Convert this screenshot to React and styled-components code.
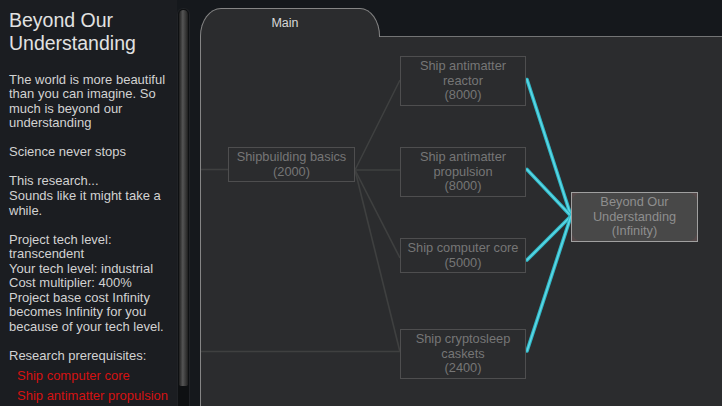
import React from "react";
import styled, { createGlobalStyle } from "styled-components";

const Global = createGlobalStyle`
  html, body { margin: 0; padding: 0; background: #15181c; overflow: hidden; }
  body { font-family: "Liberation Sans", Arial, sans-serif; }
  * { box-sizing: border-box; }
`;

const Screen = styled.div`
  display: flex;
  width: 722px;
  height: 406px;
  background: #15181c;
  overflow: hidden;
`;

const Sidebar = styled.aside`
  width: 177px;
  flex: none;
  padding: 9px 4px 0 9px;
  background: #1b1d21;
  color: #d2d2d2;
  overflow: hidden;
`;

const Title = styled.h1`
  margin: 0 0 18.5px;
  font-size: 19.5px;
  line-height: 22.5px;
  font-weight: normal;
  color: #e2e2e2;
`;

const Para = styled.p`
  margin: 0 0 14.56px;
  font-size: 13px;
  line-height: 14.56px;
  white-space: pre-line;
`;

const PrereqList = styled.ul`
  list-style: none;
  margin: 2.5px 0 0;
  padding: 0 0 0 8px;
`;

const Prereq = styled.li`
  font-size: 13px;
  line-height: 20px;
  color: #d41212;
  white-space: nowrap;
`;

const ScrollTrack = styled.div`
  width: 13px;
  flex: none;
  margin-top: 8px;
  padding: 1px 1px 0;
  background: #0e1012;
  border-radius: 6px 6px 0 0;
  border: 1px solid #202226;
  border-bottom: none;
`;

const ScrollThumb = styled.div`
  height: 376px;
  border-radius: 5px 5px 2px 2px;
  background: linear-gradient(
    to right,
    #1f1f1f 0%,
    #3a3a3a 22%,
    #555 42%,
    #444 60%,
    #333 80%,
    #1e1e1e 100%
  );
`;

const Main = styled.section`
  flex: 1;
  margin-left: 10px;
  padding-top: 8px;
  display: flex;
  flex-direction: column;
  min-width: 0;
`;

const TabRow = styled.div`
  display: flex;
  height: 29px;
  flex: none;
`;

const Tab = styled.div`
  width: 180px;
  flex: none;
  background: #2b2c2e;
  border: 1px solid #858585;
  border-bottom: none;
  border-radius: 21px 20px 0 0 / 28px 28px 0 0;
  color: #d8d8d8;
  font-size: 12.5px;
  line-height: 14px;
  padding: 7px 10px 0 0;
  text-align: center;
`;

const TabFiller = styled.div`
  flex: 1;
  border-bottom: 1px solid #737475;
`;

const Canvas = styled.div`
  position: relative;
  flex: 1;
  background: #2b2c2e;
  border-left: 1px solid #858585;
`;

const Links = styled.svg`
  position: absolute;
  left: 0;
  top: 0;
  width: 100%;
  height: 100%;
  overflow: visible;
`;

const Node = styled.div`
  position: absolute;
  width: ${(p) => p.$w || 126}px;
  padding: 2px 0;
  border: 1px solid ${(p) => (p.$goal ? "#a0a0a0" : "#4e4e4f")};
  background: ${(p) => (p.$goal ? "#55494a" : "#2b2c2e")};
  color: ${(p) => (p.$goal ? "#8e8e8e" : "#767676")};
  font-size: 12.8px;
  line-height: 14.5px;
  text-align: center;
`;

const NodeLabel = styled.div`
  margin: ${(p) => (p.$goal ? "-2px 0" : "0")};
  padding: ${(p) => (p.$goal ? "2px 0" : "0")};
  background: ${(p) => (p.$goal ? "#484848" : "transparent")};
  border-radius: ${(p) => (p.$goal ? "9px" : "0")};
`;

const nodes = [
  { id: "basics", x: 27, y: 110, w: 127, lines: ["Shipbuilding basics", "(2000)"] },
  { id: "reactor", x: 199, y: 19, lines: ["Ship antimatter", "reactor", "(8000)"] },
  { id: "propulsion", x: 199, y: 110, lines: ["Ship antimatter", "propulsion", "(8000)"] },
  { id: "core", x: 199, y: 201, lines: ["Ship computer core", "(5000)"] },
  { id: "crypto", x: 199, y: 292, lines: ["Ship cryptosleep", "caskets", "(2400)"] },
  { id: "goal", x: 370, y: 155, w: 127, goal: true, lines: ["Beyond Our", "Understanding", "(Infinity)"] },
];

const grayLinks = [
  [0, 132.5, 27, 132.5],
  [0, 314.5, 199, 314.5],
  [154, 133, 199, 43],
  [154, 133, 199, 133],
  [154, 133, 199, 221],
  [154, 133, 199, 315],
];

const cyanLinks = [
  [326, 42.5, 370, 179],
  [326, 132.5, 370, 179],
  [326, 223, 370, 179],
  [326, 314, 370, 179],
];

export default function App() {
  return (
    <>
      <Global />
      <Screen>
        <Sidebar>
          <Title>Beyond Our Understanding</Title>
          <Para>
            The world is more beautiful than you can imagine. So much is beyond our understanding
          </Para>
          <Para>Science never stops</Para>
          <Para>{"This research...\nSounds like it might take a while."}</Para>
          <Para>
            {"Project tech level: transcendent\nYour tech level: industrial\nCost multiplier: 400%\nProject base cost Infinity becomes Infinity for you because of your tech level."}
          </Para>
          <Para as="div" style={{ marginBottom: 0 }}>Research prerequisites:</Para>
          <PrereqList>
            <Prereq>Ship computer core</Prereq>
            <Prereq>Ship antimatter propulsion</Prereq>
          </PrereqList>
        </Sidebar>
        <ScrollTrack>
          <ScrollThumb />
        </ScrollTrack>
        <Main>
          <TabRow>
            <Tab>Main</Tab>
            <TabFiller />
          </TabRow>
          <Canvas>
            <Links>
              {grayLinks.map(([x1, y1, x2, y2], i) => (
                <line key={i} x1={x1} y1={y1} x2={x2} y2={y2} stroke="#3f4040" strokeWidth="1.6" />
              ))}
              {cyanLinks.map(([x1, y1, x2, y2], i) => (
                <g key={i}>
                  <line x1={x1} y1={y1} x2={x2} y2={y2} stroke="#2fb7c6" strokeWidth="3.6" strokeLinecap="round" />
                  <line x1={x1} y1={y1} x2={x2} y2={y2} stroke="#5fd9e6" strokeWidth="1.4" strokeLinecap="round" />
                </g>
              ))}
            </Links>
            {nodes.map((n) => (
              <Node key={n.id} $goal={n.goal} $w={n.w} style={{ left: n.x, top: n.y }}>
                <NodeLabel $goal={n.goal}>
                  {n.lines.map((l, i) => (
                    <div key={i}>{l}</div>
                  ))}
                </NodeLabel>
              </Node>
            ))}
          </Canvas>
        </Main>
      </Screen>
    </>
  );
}
